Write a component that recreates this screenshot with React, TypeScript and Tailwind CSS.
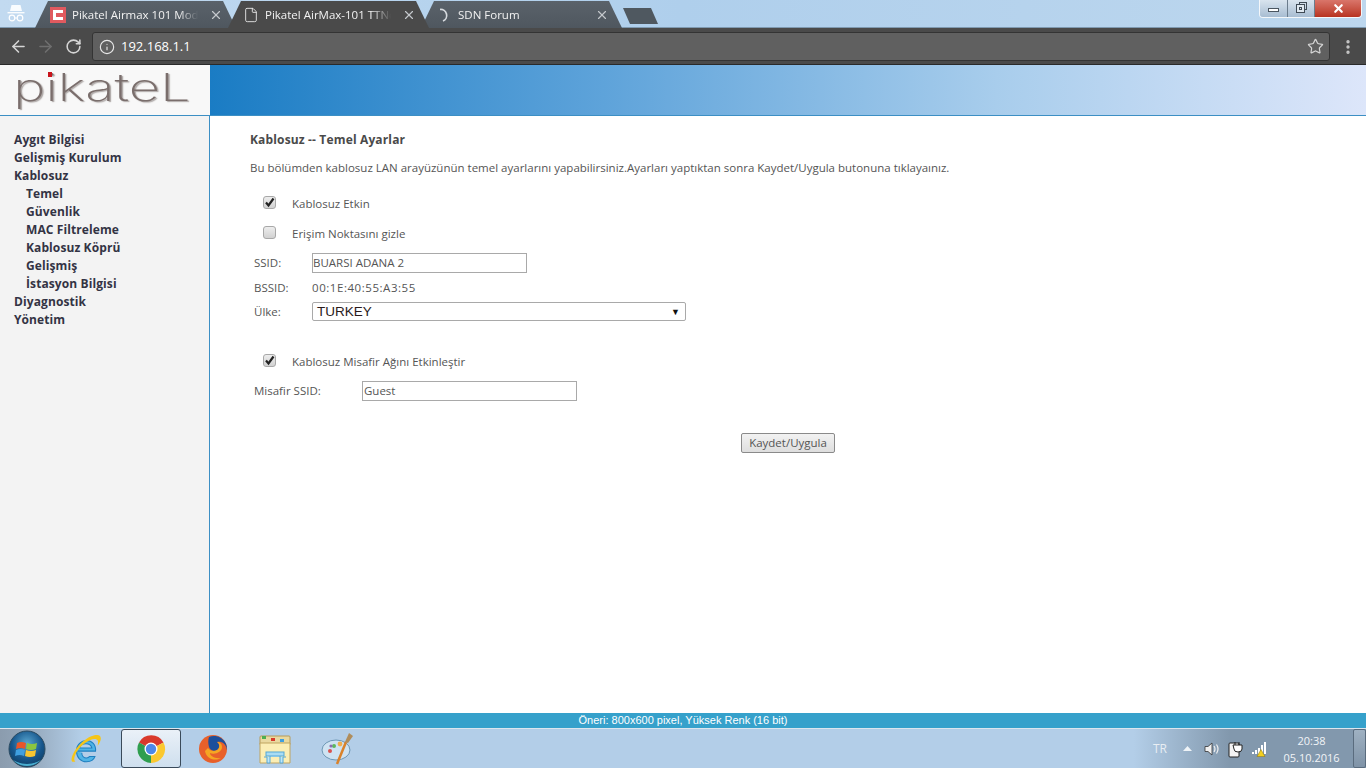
import React from "react";
import { ArrowLeft, ArrowRight, RotateCw, Info, Star, X, File, MoreVertical } from "lucide-react";

const font = "font-['Open_Sans','Noto_Sans',sans-serif]";

function Tab({ active, icon, title }: { active?: boolean; icon: React.ReactNode; title: string }) {
  return (
    <div className={`relative ${active ? "z-10 bg-[#4a4a4a]" : "bg-gradient-to-b from-[#5a626a] to-[#4f575f]"} w-[201px] -mr-[8px] -mb-[1px] h-[27px] flex items-center pl-[15px] pr-[13px] gap-[6px] [clip-path:polygon(0_100%,13px_0,calc(100%-13px)_0,100%_100%)]`}>
      <span className="w-[16px] h-[16px] flex items-center justify-center shrink-0">{icon}</span>
      <span className="flex-1 overflow-hidden whitespace-nowrap text-[11.500px] text-[#f2f2f2] [mask-image:linear-gradient(90deg,#000_82%,transparent_97%)]">{title}</span>
      <X size={14} className="text-[#c4c8cc] shrink-0 ml-[1px]" strokeWidth={2} />
    </div>
  );
}

function Check({ checked }: { checked?: boolean }) {
  return (
    <span className="w-[13px] h-[13px] -mt-[3px] rounded-[3px] border border-[#a8a8a8] bg-gradient-to-b from-[#ededed] to-[#d2d2d2] flex items-center justify-center">
      {checked && (
        <svg width="11" height="11" viewBox="0 0 11 11">
          <path d="M2 5.500 L4.500 8.500 L9.500 1.500" fill="none" stroke="#222" strokeWidth="2.200" />
        </svg>
      )}
    </span>
  );
}

const menu: [string, boolean][] = [
  ["Aygıt Bilgisi", false],
  ["Gelişmiş Kurulum", false],
  ["Kablosuz", false],
  ["Temel", true],
  ["Güvenlik", true],
  ["MAC Filtreleme", true],
  ["Kablosuz Köprü", true],
  ["Gelişmiş", true],
  ["İstasyon Bilgisi", true],
  ["Diyagnostik", false],
  ["Yönetim", false],
];

function WinLogo() {
  return (
    <svg width="38" height="38" viewBox="0 0 38 38">
      <defs>
        <radialGradient id="orb" cx="50%" cy="35%" r="70%">
          <stop offset="0" stopColor="#5aa7d0" />
          <stop offset="0.6" stopColor="#16568c" />
          <stop offset="1" stopColor="#0e3a5e" />
        </radialGradient>
      </defs>
      <circle cx="19" cy="19" r="18" fill="url(#orb)" stroke="#2b4a60" />
      <path d="M9 13 Q13 11 18 13 L17 19 Q13 17 8 19Z" fill="#e8562a" />
      <path d="M19 13 Q24 15 29 13 L28 19 Q23 21 18 19Z" fill="#8cc63f" />
      <path d="M8 20 Q13 18 17 20 L16 26 Q12 24 7 26Z" fill="#3f9fe0" />
      <path d="M18 20 Q23 22 28 20 L27 26 Q22 28 17 26Z" fill="#f6c531" />
      <path d="M5 30 Q19 38 33 30 Q27 36 19 36 Q11 36 5 30Z" fill="#58c8e8" opacity="0.8" />
    </svg>
  );
}

function IE() {
  return (
    <svg width="36" height="36" viewBox="0 0 34 34">
      <path d="M9 19h17c.6-6-3.500-10-8.500-10S8 13 8 19s4 10 9.500 10c4 0 7-2 8-5h-5c-.8 1-2 1.500-3 1.500-2.500 0-4.500-2-4.500-5M11 16c.3-2.500 3-4 6-4s5 1.500 5.500 4z" fill="#4fb4e6" stroke="#1d7fc0" strokeWidth="1" fillRule="evenodd" />
      <path d="M4 29C1 25 10 10 22 5c5-2 9-2 9 2 0 2-1 4-3 7 .5-3 1-5-1-6-4-2-14 4-19 12-2 4-3 7-1 9z" fill="#f5c518" />
    </svg>
  );
}

function ChromeIcon() {
  return (
    <svg width="30" height="30" viewBox="0 0 30 30">
      <path d="M15 15 L3 8.500 A14 14 0 0 1 27.500 8.500 Z" fill="#d9392b" />
      <path d="M15 15 L27.500 8.500 A14 14 0 0 1 15 29 Z" fill="#fbc82f" />
      <path d="M15 15 L15 29 A14 14 0 0 1 3 8.500 Z" fill="#2f9e4f" />
      <circle cx="15" cy="15" r="6.500" fill="#fff" />
      <circle cx="15" cy="15" r="5.200" fill="#4d88e8" />
    </svg>
  );
}

function Firefox() {
  return (
    <svg width="32" height="32" viewBox="0 0 32 32">
      <circle cx="16" cy="16" r="14" fill="#e8602a" />
      <path d="M12 4 A13 13 0 0 1 30 17 C29 10 24 8 20 9 C23 11 23 15 20 17 C17 19 13 17 12 14 C11 10 11 7 12 4Z" fill="#1c4f9c" />
      <path d="M20 9 C23 11 23 15 20 17 C17 19 13 18 11 15 L8 18 C9 25 17 29 24 25 C18 26 13 23 13 20 C18 22 25 19 25 14 C25 11 23 9 20 9Z" fill="#f5a623" />
    </svg>
  );
}

function Explorer() {
  return (
    <svg width="34" height="32" viewBox="0 0 34 32">
      <rect x="2" y="3" width="30" height="9" rx="1" fill="#e9d9a0" stroke="#b59a5a" />
      <rect x="4" y="3" width="4" height="3" fill="#4caf50" />
      <rect x="13" y="5" width="4" height="3" fill="#d9392b" />
      <rect x="22" y="6" width="4" height="3" fill="#3f9fe0" />
      <path d="M2 10 H32 V30 H2 Z" fill="#fbeeb5" stroke="#bfa460" />
      <path d="M6 24 H9 V30 H12 V22 H22 V30 H25 V24 H28" fill="#bfe6f7" stroke="#55a7d6" />
      <rect x="8" y="19" width="18" height="4" fill="#a8dcf4" stroke="#55a7d6" />
    </svg>
  );
}

function Paint() {
  return (
    <svg width="34" height="34" viewBox="0 0 34 34">
      <ellipse cx="15" cy="18" rx="14" ry="10" fill="#cfe3f2" stroke="#6d97b5" />
      <circle cx="9" cy="19" r="2" fill="#d9534f" />
      <circle cx="13" cy="14" r="2" fill="#5cb85c" />
      <circle cx="19" cy="12" r="2.400" fill="#f0ad4e" />
      <circle cx="10" cy="14" r="1.600" fill="#8c6bb1" />
      <path d="M16 32 L25 10" stroke="#d9822b" strokeWidth="2.500" />
      <path d="M24 10 L28 1 L32 4 L27 11Z" fill="#b08d5b" />
    </svg>
  );
}

export default function App() {
  return (
    <div className={`w-[1366px] h-[768px] overflow-hidden flex flex-col bg-white ${font}`}>
      {/* tab strip */}
      <div className="h-[28px] shrink-0 flex items-end bg-gradient-to-r from-[#c2daf0] via-[#afcfec] to-[#bdd7ee] pl-[35px] relative border-b border-[#7f9ab1]">
        <div className="absolute left-[7px] top-[4px] w-[18px] h-[18px]">
          <svg width="18" height="18" viewBox="0 0 18 18">
            <path d="M4.500 1 L13.500 1 L15 7 L3 7 Z" fill="#fff" opacity="0.9" />
            <rect x="0.500" y="8" width="17" height="1.400" fill="#fff" opacity="0.9" />
            <circle cx="5" cy="14" r="2.800" fill="none" stroke="#fff" strokeWidth="1.200" />
            <circle cx="13" cy="14" r="2.800" fill="none" stroke="#fff" strokeWidth="1.200" />
            <path d="M7.800 14 H10.200" stroke="#fff" strokeWidth="1" />
          </svg>
        </div>
        <Tab
          title="Pikatel Airmax 101 Modem"
          icon={
            <span className="w-[16px] h-[16px] bg-[#e05a5f] flex items-center justify-center">
              <span className="w-[10px] h-[10px] border-[3px] border-r-0 border-white" />
            </span>
          }
        />
        <Tab active title="Pikatel AirMax-101 TTNet" icon={<File size={16} className="text-[#f0f0f0]" strokeWidth={1.300} />} />
        <Tab
          title="SDN Forum"
          icon={
            <svg width="14" height="14" viewBox="0 0 14 14">
              <path d="M3 1.500 A6 6 0 0 1 6 13" fill="none" stroke="#d6dade" strokeWidth="1.700" />
            </svg>
          }
        />
        <div className="w-[35px] h-[16px] ml-[9px] mb-[3px] bg-[#4f5860] [clip-path:polygon(0_0,80%_0,100%_100%,20%_100%)]" />
        <div className="absolute right-[4px] top-0 h-[18px] flex rounded-b-[4px] border border-t-0 border-[#f4f7fa] overflow-hidden">
          <div className="w-[28px] flex items-center justify-center bg-gradient-to-b from-[#d9e4ee] to-[#a8bdd2] border-r border-[#6b7c8c]">
            <div className="w-[11px] h-[4px] mt-[3px] border border-[#4a5560] bg-white" />
          </div>
          <div className="w-[27px] flex items-center justify-center bg-gradient-to-b from-[#d9e4ee] to-[#a8bdd2] border-r border-[#6b7c8c]">
            <div className="relative w-[11px] h-[11px] -mt-[2px]">
              <div className="absolute right-0 top-0 w-[8px] h-[8px] border border-[#3f4a55]" />
              <div className="absolute left-0 bottom-0 w-[9px] h-[9px] border border-[#3f4a55] bg-[#dfe8f0]">
                <div className="ml-[2px] mt-[2px] w-[3px] h-[3px] border border-[#3f4a55]" />
              </div>
            </div>
          </div>
          <div className="w-[46px] flex items-center justify-center bg-gradient-to-b from-[#d9756a] to-[#b8321f]">
            <X size={13} strokeWidth={4} className="text-white" />
          </div>
        </div>
      </div>
      {/* toolbar */}
      <div className="h-[37px] shrink-0 bg-[#4a4a4a] border-b border-[#2a2a2a] flex items-center pl-[9px] pr-[9px] pt-[1px]">
        <ArrowLeft size={19} strokeWidth={2} className="text-[#d5d5d5] mr-[8px]" />
        <ArrowRight size={19} strokeWidth={2} className="text-[#6f6f6f] mr-[10px]" />
        <RotateCw size={17} strokeWidth={2.200} className="text-[#d5d5d5] mr-[10px]" />
        <div className="flex-1 h-[29px] rounded-[3px] bg-[#606060] border border-[#343434] flex items-center pl-[6px] pr-[5px]">
          <Info size={16} strokeWidth={1.700} className="text-[#e8e8e8] mr-[6px]" />
          <span className="flex-1 text-[13px] text-white">192.168.1.1</span>
          <Star size={17} strokeWidth={1.700} className="text-[#d5d5d5]" />
        </div>
        <MoreVertical size={18} strokeWidth={2.500} className="text-[#c8c8c8] ml-[9px]" />
      </div>
      {/* banner */}
      <div className="h-[51px] shrink-0 flex border-b border-[#3c8fc4]">
        <div className="w-[210px] shrink-0 bg-[#f8f8f8] flex items-center justify-center relative">
          <span className="scale-x-[1.43] text-[38px] leading-none text-[#7a6e6c] font-extralight font-['Inter',sans-serif] [text-shadow:1px_1px_1px_#a8a2a0] -mt-[7px] -ml-[6px]">pikateL</span>
          <span className="absolute left-[48px] top-[7px] w-[4px] h-[5px] bg-[#c8141c]" />
        </div>
        <div className="flex-1 bg-[linear-gradient(90deg,#1a7cc4_0%,#5ea3da_34%,#a8cdec_68%,#dde6fa_100%)]" />
      </div>
      {/* content */}
      <div className="flex-1 flex min-h-0">
        <aside className="w-[210px] shrink-0 bg-[#f3f3f3] border-r border-[#3c8fc4] pt-[15px] pl-[14px]">
          {menu.map(([t, sub]) => (
            <div key={t} className={`h-[18px] leading-[18px] text-[12px] font-bold text-[#333344] whitespace-nowrap tracking-[0.1px] ${sub ? "pl-[12px]" : ""}`}>{t}</div>
          ))}
        </aside>
        <main className="flex-1 text-[11.500px] text-[#555] pl-[40px] pt-[15px] relative">
          <div className="h-[18px] leading-[18px] text-[12px] tracking-[0.15px] font-bold text-[#4a4a4a]">Kablosuz -- Temel Ayarlar</div>
          <div className="h-[18px] leading-[18px] mt-[10px] whitespace-nowrap">Bu bölümden kablosuz LAN arayüzünün temel ayarlarını yapabilirsiniz.Ayarları yaptıktan sonra Kaydet/Uygula butonuna tıklayaınız.</div>
          <div className="flex items-center h-[18px] mt-[18px] pl-[13px] gap-[16px]"><Check checked /><span>Kablosuz Etkin</span></div>
          <div className="flex items-center h-[18px] mt-[12px] pl-[13px] gap-[16px]"><Check /><span>Erişim Noktasını gizle</span></div>
          <div className="flex items-center h-[20px] mt-[10px] pl-[4px]">
            <span className="w-[58px]">SSID:</span>
            <div className="w-[215px] h-[20px] border border-[#a9a9a9] leading-[18px] text-[#555]">BUARSI ADANA 2</div>
          </div>
          <div className="flex items-center h-[18px] mt-[6px] pl-[4px]">
            <span className="w-[58px]">BSSID:</span>
            <span className="tracking-[0.55px]">00:1E:40:55:A3:55</span>
          </div>
          <div className="flex items-center h-[19px] mt-[5px] pl-[4px]">
            <span className="w-[58px]">Ülke:</span>
            <div className="w-[374px] h-[19px] border border-[#a9a9a9] rounded-[2px] flex items-center justify-between pl-[4px] pr-[5px]">
              <span className="text-[13.500px] text-[#2a1a1a] font-['Liberation_Sans',sans-serif] mt-[1px]">TURKEY</span>
              <span className="text-[9px] text-[#111]">▼</span>
            </div>
          </div>
          <div className="flex items-center h-[18px] mt-[32px] pl-[13px] gap-[16px]"><Check checked /><span>Kablosuz Misafir Ağını Etkinleştir</span></div>
          <div className="flex items-center h-[20px] mt-[10px] pl-[4px]">
            <span className="w-[108px]">Misafir SSID:</span>
            <div className="w-[215px] h-[20px] border border-[#a9a9a9] leading-[18px] pl-[1px] text-[#555]">Guest</div>
          </div>
          <div className="mt-[32px] ml-[491px] w-[94px] h-[20px] border border-[#8a8a8a] rounded-[2px] bg-gradient-to-b from-[#f2f2f2] to-[#dedede] text-center leading-[18px] text-[#555]">Kaydet/Uygula</div>
        </main>
      </div>
      {/* status strip */}
      <div className="h-[15px] shrink-0 bg-[#36a1cb] text-center text-[11px] leading-[15px] text-white font-['Liberation_Sans',sans-serif]">Öneri: 800x600 pixel, Yüksek Renk (16 bit)</div>
      {/* taskbar */}
      <div className="h-[40px] shrink-0 border-t border-[#dce6ee] flex items-center bg-[linear-gradient(90deg,#8b9cae_0%,#93a6b9_2%,#b3cee8_6%,#b3cee8_83%,#8298ad_90%,#8298ad_100%)]">
        <div className="w-[63px] flex justify-center"><span className="-ml-[9px]"><WinLogo /></span></div>
        <div className="w-[58px] flex justify-center"><span className="-ml-[12px]"><IE /></span></div>
        <div className="w-[60px] h-[39px] flex items-center justify-center rounded-[3px] border border-[#3a4a5a] bg-gradient-to-b from-[#eaf1f8] to-[#cfdfee]"><ChromeIcon /></div>
        <div className="w-[63px] flex justify-center"><Firefox /></div>
        <div className="w-[62px] flex justify-center"><Explorer /></div>
        <div className="w-[64px] flex justify-center"><Paint /></div>
        <div className="flex-1" />
        <span className="text-[12px] text-[#e8eef3] mr-[16px]">TR</span>
        <svg width="9" height="5" viewBox="0 0 9 5" className="mr-[12px]"><path d="M4.500 0 L9 5 H0 Z" fill="#eef3f7" /></svg>
        <svg width="16" height="16" viewBox="0 0 16 16" className="mr-[8px]">
          <path d="M1 5.500 H4 L8 2 V14 L4 10.500 H1 Z" fill="#f0f0f0" stroke="#333" strokeWidth="0.800" />
          <path d="M10 5 Q12 8 10 11 M12.500 3.500 Q15.500 8 12.500 12.500" fill="none" stroke="#f0f0f0" strokeWidth="1.200" />
        </svg>
        <svg width="16" height="18" viewBox="0 0 16 18" className="mr-[8px]">
          <rect x="1" y="3" width="10" height="14" rx="1" fill="#f4f4f4" stroke="#222" />
          <path d="M7 2 V5 M11 2 V5 M5 5 H14 V9 Q14 12 10 12 Q6 12 6 9 Z" fill="#fff" stroke="#222" />
        </svg>
        <svg width="16" height="16" viewBox="0 0 16 16" className="mr-[15px]">
          <rect x="0" y="11" width="2" height="2" fill="#fff" />
          <rect x="3" y="9" width="2" height="4" fill="#fff" />
          <rect x="6" y="7" width="2" height="6" fill="#fff" />
          <rect x="9" y="4" width="2" height="9" fill="#fff" />
          <rect x="12" y="1" width="2" height="12" fill="#fff" />
          <path d="M5 15.500 L9 8.500 L13 15.500 Z" fill="#f4d020" stroke="#8a7410" strokeWidth="0.500" />
        </svg>
        <div className="w-[57px] text-center text-[11px] leading-[17px] text-[#f1f4f7] mr-[13px]">
          <div>20:38</div>
          <div className="whitespace-nowrap">05.10.2016</div>
        </div>
        <div className="w-[13px] h-[39px] border border-[#5a6c7e] rounded-[2px] bg-gradient-to-b from-[#9fb1c2] to-[#7f93a7]" />
      </div>
    </div>
  );
}
